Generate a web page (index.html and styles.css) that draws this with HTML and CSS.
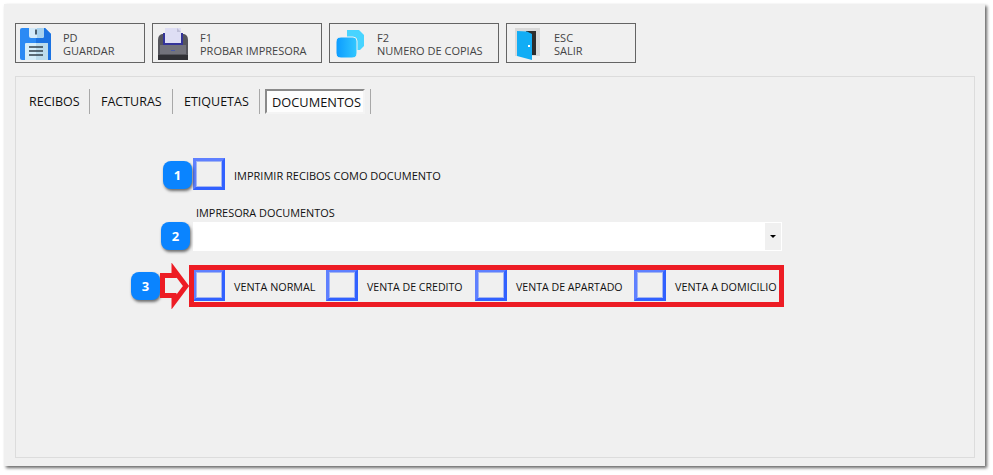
FILE: index.html
```html
<!DOCTYPE html>
<html lang="es">
<head>
<meta charset="utf-8">
<title>Documentos</title>
<link rel="stylesheet" href="styles.css">
</head>
<body>
<div class="window">
  <div class="toolbar">
    <button class="tool tool-s">
      <svg class="ico" viewBox="0 0 32 32"><path d="M2 0H25L31 6V30Q31 32 29 32H2Q0 32 0 30V2Q0 0 2 0Z" fill="#2b8af4"/><path d="M16 0H25L31 6V32H16Z" fill="#1b73e2"/><path d="M9 0H24V8Q24 10 22 10H11Q9 10 9 8Z" fill="#d3eafa"/><path d="M17 0H24V8Q24 10 22 10H17Z" fill="#a9d2ee"/><rect x="15" y="1.500" width="2" height="5" fill="#4a5f70"/><path d="M6 15H27Q28 15 28 16V32H5V16Q5 15 6 15Z" fill="#d5edf9"/><path d="M16 15H27Q28 15 28 16V32H16Z" fill="#bcdcec"/><path d="M9 19H23M9 23H23M9 27H23" stroke="#33404a" stroke-width="1.700"/></svg>
      <span class="tool-t">PD<br>GUARDAR</span>
    </button>
    <button class="tool tool-l">
      <svg class="ico" viewBox="0 0 32 32"><path d="M1 12Q1 7 5 6H27Q31 7 31 12V32H1Z" fill="#55555c"/><path d="M3 17H29V26H3Z" fill="#72727b"/><rect x="6" y="5" width="20" height="12" fill="#34349a"/><rect x="8" y="0" width="16" height="15" fill="#dedef4"/><path d="M20 0L24 4H20Z" fill="#bfbfd8"/><rect x="1" y="27" width="30" height="5" fill="#303035"/><rect x="14" y="22" width="4" height="1" fill="#4a5aa8"/></svg>
      <span class="tool-t">F1<br>PROBAR IMPRESORA</span>
    </button>
    <button class="tool tool-l">
      <svg class="ico" viewBox="0 0 32 32"><defs><linearGradient id="cp" x1="0" x2="1" y1="0" y2="0"><stop offset="0" stop-color="#0c9bff"/><stop offset="1" stop-color="#32c8ff"/></linearGradient></defs><path d="M13 2H25L30 7V18L26 22H13Z" fill="#48d4ff"/><path d="M7 9H19Q23 9 23 13V25Q23 30 18 30H7Q2 30 2 25V14Q2 9 7 9Z" fill="url(#cp)" stroke="#f0f0f0"/></svg>
      <span class="tool-t">F2<br>NUMERO DE COPIAS</span>
    </button>
    <button class="tool tool-s">
      <svg class="ico" viewBox="0 0 32 32"><rect x="4" y="0" width="25" height="28" fill="#d9d9d9"/><rect x="15" y="3" width="10" height="24" fill="#2d2d2d"/><path d="M6 3L16 3.500L21 6V32L6 28Z" fill="#12adf5"/><rect x="17" y="17" width="2" height="2" fill="#fff"/></svg>
      <span class="tool-t">ESC<br>SALIR</span>
    </button>
  </div>
  <div class="panel">
    <div class="tabs">
      <div class="tab tab-a">RECIBOS</div>
      <div class="tab tab-b">FACTURAS</div>
      <div class="tab tab-c">ETIQUETAS</div>
      <div class="tab tab-d"><span class="tab-on">DOCUMENTOS</span></div>
    </div>
    <div class="form">
      <div class="row">
        <span class="check"></span>
        <span class="lbl lbl-wide">IMPRIMIR RECIBOS COMO DOCUMENTO</span>
      </div>
      <div class="field">
        <div class="field-lbl">IMPRESORA DOCUMENTOS</div>
        <div class="combo"><span class="combo-btn"><i class="caret"></i></span></div>
      </div>
      <div class="row row-3">
        <span class="check"></span><span class="lbl w1">VENTA NORMAL</span>
        <span class="check"></span><span class="lbl w2">VENTA DE CREDITO</span>
        <span class="check"></span><span class="lbl w3">VENTA DE APARTADO</span>
        <span class="check"></span><span class="lbl">VENTA A DOMICILIO</span>
      </div>
    </div>
  </div>
</div>
<span class="badge b1">1</span>
<span class="badge b2">2</span>
<span class="badge b3">3</span>
<div class="frame"></div>
<svg class="arrow" viewBox="0 0 30 46"><path d="M2.500 12.500H14V7L26 23L14 39V32.500H2.500Z" fill="#f0f0f0" stroke="#ed1c24" stroke-width="5"/></svg>
</body>
</html>
```

FILE: styles.css
```css
* { box-sizing: border-box; }
html, body { margin: 0; height: 100%; background: #fff; overflow: hidden; }
body { position: relative; font-family: "Open Sans", "Noto Sans", sans-serif; color: #111; }

.window {
  width: 981px; height: 462px; margin: 4px 0 0 4px;
  background: #f0f0f0;
  padding: 19px 10px 8px 11px;
  box-shadow: 2px 2px 3px rgba(0,0,0,.6);
  display: flex; flex-direction: column; gap: 13px;
}

.toolbar { display: flex; gap: 7px; height: 40px; }
.tool {
  display: flex; align-items: center; height: 40px; padding: 2px 0 0 4px;
  background: #f0f0f0; border: 1px solid #646464;
  font: 11px/13px "Open Sans", sans-serif; color: #444; text-align: left;
}
.tool-s { width: 130px; }
.tool-l { width: 170px; }
.ico { width: 32px; height: 32px; flex: none; }
.tool-t { margin-left: 11px; white-space: nowrap; }

.panel { flex: 1; border: 1px solid #dcdcdc; padding: 12px 0 0 0; }

.tabs { display: flex; height: 25px; align-items: center; font-size: 12.5px; }
.tab { height: 25px; line-height: 25px; border-right: 1px solid #a8a8a8; padding-left: 13px; white-space: nowrap; }
.tab-a { width: 74px; }
.tab-b { width: 83px; padding-left: 11px; }
.tab-c { width: 87px; padding-left: 11px; }
.tab-d { width: 111px; padding-left: 5px; }
.tab-on {
  display: block; width: 100px; height: 25px; padding-left: 5px; line-height: 23px; font-size: 12.8px;
  background: #fdfdfd; border: 2px solid; border-color: #8a8a8a #f4f4f4 #f4f4f4 #8a8a8a;
}

.form { margin: 44px 0 0 177px; width: 590px; display: flex; flex-direction: column; }
.row { display: flex; align-items: center; height: 32px; }
.check {
  width: 32px; height: 32px; flex: none; background: #f0f0f0;
  border: 3px solid; border-color: #5f80ff #3161ff #3161ff #5f80ff;
  box-shadow: inset 1px 1px 0 #a3b5f2, inset -1px -1px 0 #a3b5f2;
}
.lbl { font-size: 10.8px; margin-left: 9px; padding-top: 3px; white-space: nowrap; }
.lbl-wide { font-size: 11px; }
.w1 { width: 92px; }
.w2 { width: 108px; font-size: 10.6px; }
.w3 { width: 118px; font-size: 10.6px; }

.field { margin-top: 17px; margin-right: 1px; }
.field-lbl { font-size: 10.9px; height: 15px; line-height: 11px; padding-left: 3px; white-space: nowrap; }
.combo { height: 29px; background: #fff; display: flex; justify-content: flex-end; padding: 1px; }
.combo-btn { width: 16px; background: #f0f0f0; display: flex; align-items: center; justify-content: center; }
.caret { width: 0; height: 0; border: 3px solid transparent; border-top: 3px solid #000; border-bottom: 0; }

.row-3 { margin-top: 18px; }

/* Annotations placed over the screenshot */
.badge {
  position: absolute; width: 29px; height: 28px; border-radius: 8px;
  background: #0a84ff; color: #fff; font: bold 13px/28px "Open Sans", sans-serif; text-align: center;
  box-shadow: 1px 2px 3px rgba(0,0,0,.55);
}
.b1 { left: 163px; top: 161px; }
.b2 { left: 161px; top: 222px; }
.b3 { left: 131px; top: 272px; }
.frame { position: absolute; left: 189px; top: 265px; width: 595px; height: 42px; border: 5px solid #ed1c24; }
.arrow { position: absolute; left: 160px; top: 263px; width: 30px; height: 46px; }
```
